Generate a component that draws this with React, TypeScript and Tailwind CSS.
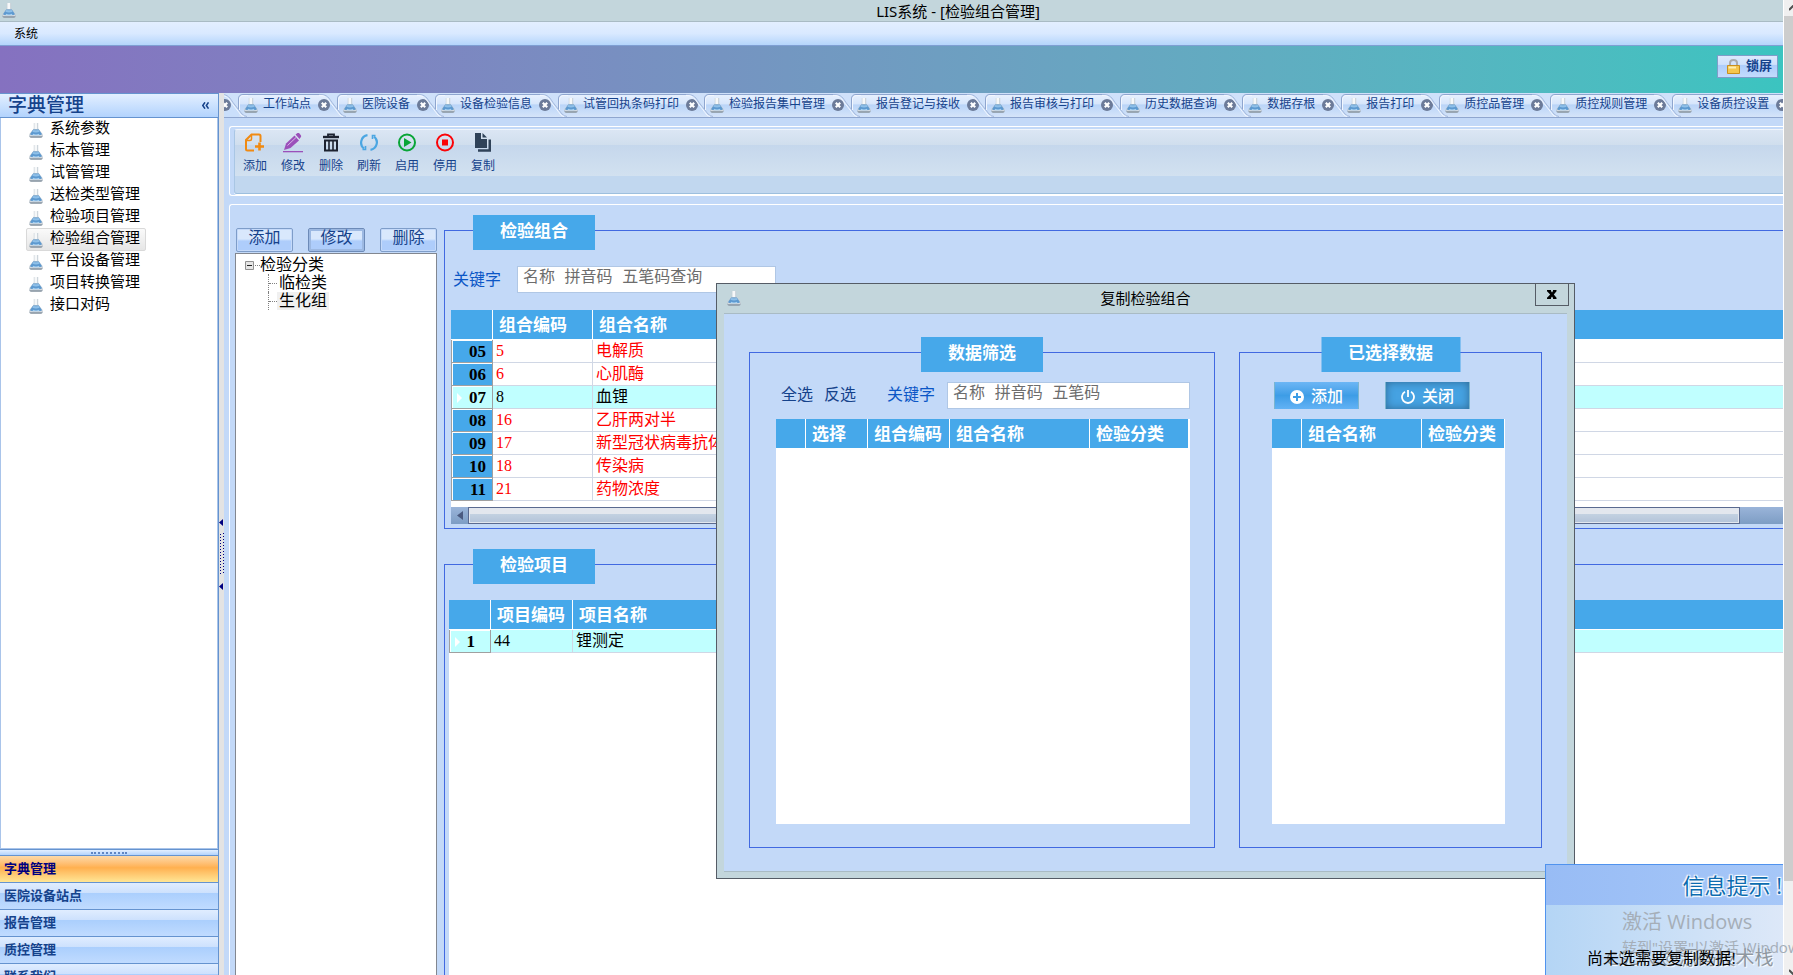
import type { ReactNode } from "react";

const sidebarItems = [
  "系统参数",
  "标本管理",
  "试管管理",
  "送检类型管理",
  "检验项目管理",
  "检验组合管理",
  "平台设备管理",
  "项目转换管理",
  "接口对码",
];

const navGroups = ["字典管理", "医院设备站点", "报告管理", "质控管理", "联系我们"];

const tabs = [
  "工作站点",
  "医院设备",
  "设备检验信息",
  "试管回执条码打印",
  "检验报告集中管理",
  "报告登记与接收",
  "报告审核与打印",
  "历史数据查询",
  "数据存根",
  "报告打印",
  "质控品管理",
  "质控规则管理",
  "设备质控设置",
];

const comboRows = [
  { no: "05", code: "5", name: "电解质" },
  { no: "06", code: "6", name: "心肌酶" },
  { no: "07", code: "8", name: "血锂", active: true },
  { no: "08", code: "16", name: "乙肝两对半" },
  { no: "09", code: "17", name: "新型冠状病毒抗体" },
  { no: "10", code: "18", name: "传染病" },
  { no: "11", code: "21", name: "药物浓度" },
];

function FlaskIcon() {
  return (
    <svg width="14" height="15" viewBox="0 0 14 15" className="shrink-0" aria-hidden="true">
      <path d="M4.800 0h4.400v5.500L13.600 11q.4 3.600-1.600 3.600H2Q0 14.600.4 11L4.800 5.500z" fill="#c3ccd4" />
      <path d="M5.400 0h2.800v6H5.400z" fill="#f6f8f9" />
      <path d="M4.200 6.500h5.600L13 11.200Q10.500 13 7 13T1 11.200z" fill="#5d99d0" />
      <path d="M4.500 6.800q2.500 1 5 0l1.200 1.900q-3.700 1.600-7.400 0z" fill="#8fc0e8" />
      <path d="M4 10.800q3 1.400 6 0l.4 1q-3.400 1.200-6.800 0z" fill="#a9d3f3" />
      <path d="M.4 12.800h13.200q0 2-1.600 2H2q-1.600 0-1.600-2z" fill="#8b98a4" />
      <path d="M1 12.700h12" stroke="#e3e9ee" strokeWidth="0.8" />
    </svg>
  );
}

function CloseDot() {
  return (
    <svg width="12" height="12" viewBox="0 0 12 12" className="block" aria-hidden="true">
      <circle cx="6" cy="6" r="6" fill="#6c7b99" />
      <path d="M3.800 3.800l4.400 4.400M8.200 3.800l-4.400 4.400" stroke="#fff" strokeWidth="2.200" />
    </svg>
  );
}

function TabEdge() {
  return (
    <svg width="28" height="23" viewBox="0 0 28 23" className="absolute -top-px -left-[19px]" aria-hidden="true">
      <path d="M0 0H28V1H22L18 5V16L10 7L4 1H0z" fill="#cfe1fa" />
      <path d="M0 .5H2C8 .5 10 4 13 8.500L22 20Q24 22 27 22.500" fill="none" stroke="#a3b8dc" />
      <path d="M0 1.500H1C7 1.500 9 5 12 9.500L21 21Q22 22 24 22.500" fill="none" stroke="#f2f7ff" />
      <path d="M18.500 15V5Q18.500 .5 23 .5H28" fill="none" stroke="#8fa6cf" />
      <path d="M19.500 16V6Q19.500 1.500 24 1.500H28" fill="none" stroke="#f2f7ff" />
    </svg>
  );
}

const toolbar: { label: string; icon: ReactNode }[] = [
  {
    label: "添加",
    icon: (
      <g fill="none" stroke="#f08a12" strokeWidth="2">
        <path d="M9 17.500H2.500Q1 17.500 1 16V7L6.500 1.500H14Q15.500 1.500 15.500 3V9" />
        <path d="M1.500 7.500H5Q6.500 7.500 6.500 6V2" strokeWidth="1.500" />
        <path d="M14.500 9.500v8M10 13.500h9" strokeWidth="2.600" />
      </g>
    ),
  },
  {
    label: "修改",
    icon: (
      <g fill="#9b50ba">
        <path d="M1 17L3 10.500L11.500 2.500L16 7.500L7.500 15z" />
        <path d="M12.500 1.500L14.500 0Q15.500-.5 16.500.5L18 2.500Q18.500 3.500 17.500 4.500L16.500 6z" />
        <path d="M4.500 12.500L13 4.500" stroke="#d9b5ea" strokeWidth="1" />
        <path d="M0 18h20v1.300H0z" />
      </g>
    ),
  },
  {
    label: "删除",
    icon: (
      <g fill="none" stroke="#1c2230">
        <path d="M2 4h16" strokeWidth="2.400" />
        <path d="M7 3V1.500h6V3" strokeWidth="1.800" />
        <path d="M4 7.500h12V17.500H4z" strokeWidth="2" />
        <path d="M8 8v9M12 8v9" strokeWidth="1.600" />
      </g>
    ),
  },
  {
    label: "刷新",
    icon: (
      <g fill="none" stroke="#4ba6e2" strokeWidth="2.200">
        <path d="M8.500 2.200A7.500 7.500 0 0 0 5 15.500" />
        <path d="M11.500 16.800A7.500 7.500 0 0 0 15 3.500" />
        <path d="M3.500 16.500H6.500V13M16.500 2.500H13.500V6" strokeWidth="1.600" />
      </g>
    ),
  },
  {
    label: "启用",
    icon: (
      <g>
        <circle cx="10" cy="9.500" r="8" fill="none" stroke="#08a536" strokeWidth="2" />
        <path d="M7 5L14.500 9.500L7 14z" fill="#08a536" />
      </g>
    ),
  },
  {
    label: "停用",
    icon: (
      <g>
        <circle cx="10" cy="9.500" r="8" fill="none" stroke="#fb0307" strokeWidth="2" />
        <path d="M7 6.500h6v6H7z" fill="#fb0307" />
      </g>
    ),
  },
  {
    label: "复制",
    icon: (
      <g fill="#2f4258">
        <path d="M2 0H8V6H14V15H2z" />
        <path d="M9.500 0L14 4.500H9.500z" />
        <path d="M5 16.200H15.500V6.500H18V18.700H5z" />
      </g>
    ),
  },
];

function GroupTitle({ children, center = false }: { children: ReactNode; center?: boolean }) {
  return (
    <h2
      className={
        "absolute -top-4 flex h-[35px] items-start bg-[#46a8ea] px-[27px] pt-1 text-[17px] leading-[26px] font-bold whitespace-nowrap text-white " +
        (center ? "left-1/2 -translate-x-1/2" : "left-7")
      }
    >
      {children}
    </h2>
  );
}

function HeadCell({ children, last = false }: { children?: ReactNode; last?: boolean }) {
  return (
    <th
      className={
        "h-[30px] truncate border-b border-white bg-[#46a8ea] px-[6px] pt-0.5 pb-0 text-left text-[17px] leading-[27px] font-bold text-white " +
        (last ? "" : "border-r")
      }
    >
      {children}
    </th>
  );
}

function DataRow({ no, code, name, active = false }: { no: string; code: string; name: string; active?: boolean }) {
  return (
    <tr className={active ? "bg-[#c0ffff] text-black" : "bg-white text-[#f00]"}>
      <th
        className={
          "h-[23px] border-r border-b border-l border-[#a0a0a0] p-0 text-[17px] leading-[20px] text-black shadow-[inset_1px_1px_0_#fff] " +
          (active ? "" : "bg-[#46a8ea]")
        }
      >
        <span className="flex items-center justify-between pt-px pr-[6px] pl-[5px]">
          <svg width="5" height="10" viewBox="0 0 5 10" aria-hidden="true">
            {active && <path d="M0 0L5 5L0 10z" fill="#fff" />}
          </svg>
          <span className={no.length === 1 ? "pr-[9px]" : ""}>{no}</span>
        </span>
      </th>
      <td className="border-r border-b border-[#d0d7e5] px-[3px] py-0 leading-[22px]">{code}</td>
      <td className="truncate border-b border-[#d0d7e5] px-[3px] py-0 leading-[22px]">{name}</td>
    </tr>
  );
}

function ClassicButton({ children, focused = false }: { children: ReactNode; focused?: boolean }) {
  return (
    <button
      type="button"
      className={
        "h-6 w-[57px] rounded-[2px] border bg-linear-to-b from-[#d9e8fc] from-45% to-[#aecdfb] to-55% pb-1 text-[16px] leading-[18px] text-[#15428b] " +
        (focused ? "border-[#6d8bb8] shadow-[inset_0_0_0_2px_#9db9e2]" : "border-[#7e9dc9] shadow-[inset_0_0_0_1px_#c5dafa]")
      }
    >
      {children}
    </button>
  );
}

function Sidebar() {
  return (
    <aside className="flex w-[219px] shrink-0 flex-col overflow-hidden border-r border-[#6593cf] bg-white">
      <div className="flex h-[25px] shrink-0 items-center justify-between border-y border-[#6593cf] bg-linear-to-b from-[#e3efff] to-[#b2d3fd] pr-[9px] pl-2">
        <h1 className="text-[19px] leading-[22px] font-medium text-[#15428b]">字典管理</h1>
        <button type="button" aria-label="收起" className="text-[#15428b]">
          <svg width="7" height="7" viewBox="0 0 7 7" fill="none" stroke="currentColor" strokeWidth="1.500">
            <path d="M3 .3L.8 3.500L3 6.700M6.500 .3L4.300 3.500L6.500 6.700" />
          </svg>
        </button>
      </div>
      <ul className="min-h-0 flex-1 border-x border-b border-[#a9c4ea]">
        {sidebarItems.map((item) => (
          <li key={item} className="h-[22px] pl-[25px]">
            <a
              href="#"
              className={
                "inline-flex h-[23px] items-center gap-[7px] rounded-[2px] border pr-[5px] pl-0.5 text-[15px] leading-[19px] text-black " +
                (item === "检验组合管理" ? "border-[#d9d9d9] bg-linear-to-b from-[#fafafa] to-[#e6e6e6]" : "border-transparent")
              }
            >
              <span className="pt-0.5">
                <FlaskIcon />
              </span>
              <span className="pb-0.5">{item}</span>
            </a>
          </li>
        ))}
      </ul>
      <div className="flex h-[7px] shrink-0 items-center justify-center border-y border-[#6593cf] bg-linear-to-b from-[#e3efff] to-[#b2d3fd]">
        <span className="w-[36px] border-t-2 border-dotted border-[#5f86c4]" />
      </div>
      <nav className="h-[119px] shrink-0 overflow-hidden">
        {navGroups.map((group, i) => (
          <button
            key={group}
            type="button"
            className={
              "block h-[27px] w-full border-b border-[#6593cf] pl-1 text-left text-[13px] leading-[26px] font-bold " +
              (i === 0
                ? "bg-linear-to-b from-[#fcd9a8] via-[#ffb04f] via-45% to-[#ffe695] text-[#000080]"
                : "bg-[linear-gradient(#e0edff,#cde1fd_38%,#abcffd_40%,#c0dbff)] text-[#15428b]")
            }
          >
            {group}
          </button>
        ))}
      </nav>
    </aside>
  );
}

function TabStrip() {
  return (
    <div className="flex h-[25px] shrink-0 items-end overflow-hidden border-b border-[#8fa6cf] bg-[#cfe1fa]">
      <div className="flex h-[23px] w-[15px] shrink-0 items-center justify-start border-t border-[#8fa6cf] bg-[#cadffb] pb-0.5">
        <button type="button" aria-label="关闭" className="-ml-[5px]">
          <CloseDot />
        </button>
      </div>
      {tabs.map((tab) => (
        <div
          key={tab}
          className="relative flex h-[23px] shrink-0 items-center border-t border-[#8fa6cf] bg-[linear-gradient(#e6f0fe,#d6e5fb_42%,#b9d4f8_44%,#d5e4f9)] pr-[7px] pb-0.5 pl-[5px] even:pr-2"
        >
          <TabEdge />
          <span className="relative">
            <FlaskIcon />
          </span>
          <a href="#" className="relative mx-[5px] mr-[7px] pb-0.5 text-[12px] leading-[16px] whitespace-nowrap text-[#15428b]">
            {tab}
          </a>
          <button type="button" aria-label={"关闭" + tab} className="relative">
            <CloseDot />
          </button>
        </div>
      ))}
    </div>
  );
}

function CopyDialog() {
  return (
    <div
      role="dialog"
      aria-label="复制检验组合"
      className="absolute top-[283px] left-[716px] flex h-[596px] w-[859px] flex-col border border-[#555c66] bg-[#c3d6dc] px-[7px] pb-[6px]"
    >
      <div className="relative flex h-[29px] shrink-0 items-center pl-[3px]">
        <FlaskIcon />
        <div className="flex-1 pt-0.5 pr-[17px] text-center text-[15px] leading-[27px] text-black">复制检验组合</div>
        <button
          type="button"
          aria-label="关闭窗口"
          className="absolute -top-px -right-[2px] flex h-[23px] w-[34px] items-center justify-center border border-[#555c66]"
        >
          <svg width="10" height="9" viewBox="0 0 10 9" aria-hidden="true">
            <path d="M0 0H4V1L5 2.500L6 1V0H9.500V1.200L6.800 4.500L9.500 7.800V9H6V8L5 6.500L4 8V9H0V7.800L3.200 4.500L0 1.200z" fill="#000" />
          </svg>
        </button>
      </div>
      <div className="flex flex-1 gap-6 border-y border-[#a9bbc4] bg-[#c3d9f8] px-[25px] pt-[38px] pb-[23px]">
        <section className="relative flex w-[466px] flex-col border border-[#4169e1] pt-[29px] pr-6 pb-[23px] pl-[26px]">
          <GroupTitle center>数据筛选</GroupTitle>
          <div className="flex h-[27px] shrink-0 items-center pl-[5px] text-[16px] leading-[22px]">
            <button type="button" className="pb-0.5 text-[#15428b]">
              全选
            </button>
            <button type="button" className="ml-[11px] pb-0.5 text-[#15428b]">
              反选
            </button>
            <label htmlFor="pick-keyword" className="ml-[31px] pb-0.5 text-[#0b56c6]">
              关键字
            </label>
            <input
              id="pick-keyword"
              placeholder="名称 拼音码 五笔码"
              className="ml-3 h-[27px] w-0 flex-1 border border-[#b0c7e5] bg-white px-[5px] pb-1 font-['Liberation_Mono','Noto_Sans_CJK_SC',monospace] placeholder:text-[#6d6d6d]"
            />
          </div>
          <div className="mt-2.5 flex-1 bg-white pr-0.5">
            <table className="w-full table-fixed border-separate border-spacing-0">
              <colgroup>
                <col className="w-[30px]" />
                <col className="w-[62px]" />
                <col className="w-[82px]" />
                <col className="w-[140px]" />
                <col />
              </colgroup>
              <thead>
                <tr>
                  <HeadCell />
                  <HeadCell>选择</HeadCell>
                  <HeadCell>组合编码</HeadCell>
                  <HeadCell>组合名称</HeadCell>
                  <HeadCell last>检验分类</HeadCell>
                </tr>
              </thead>
            </table>
          </div>
        </section>
        <section className="relative flex flex-1 flex-col border border-[#4169e1] pt-[29px] pr-9 pb-[23px] pl-8">
          <GroupTitle center>已选择数据</GroupTitle>
          <div className="flex h-[27px] shrink-0 gap-[26px] pl-0.5 text-[16px] font-medium text-white">
            <button
              type="button"
              className="flex w-[85px] items-center justify-center gap-[7px] border-x border-[#7ab5cf] bg-linear-to-b from-[#6cb6f5] via-[#3d9de6] to-[#62b2f5] pt-0.5"
            >
              <svg width="14" height="14" viewBox="0 0 14 14" aria-hidden="true">
                <circle cx="7" cy="7" r="7" fill="#fff" />
                <path d="M7 3v8M3 7h8" stroke="#3d9de6" strokeWidth="2" />
              </svg>
              添加
            </button>
            <button
              type="button"
              className="flex w-[85px] items-center justify-center gap-[7px] border-x border-[#7ab5cf] bg-[#46a2e2] pt-0.5 shadow-[inset_0_0_9px_#2f6a94]"
            >
              <svg width="14" height="14" viewBox="0 0 14 14" fill="none" stroke="#fff" strokeWidth="1.800" aria-hidden="true">
                <path d="M4 1.800A6 6 0 1 0 10 1.800M7 0V7" />
              </svg>
              关闭
            </button>
          </div>
          <div className="mt-2.5 flex-1 bg-white pr-px">
            <table className="w-full table-fixed border-separate border-spacing-0">
              <colgroup>
                <col className="w-[30px]" />
                <col className="w-[120px]" />
                <col />
              </colgroup>
              <thead>
                <tr>
                  <HeadCell />
                  <HeadCell>组合名称</HeadCell>
                  <HeadCell last>检验分类</HeadCell>
                </tr>
              </thead>
            </table>
          </div>
        </section>
      </div>
    </div>
  );
}

function Toast() {
  return (
    <div className="absolute right-[10px] bottom-0 h-[111px] w-[238px] border-t border-l border-[#5093ee] bg-linear-to-r from-[#b4d5f5] to-[#dde8f8] font-['Open_Sans','Noto_Sans_CJK_SC',sans-serif]">
      <div className="flex h-10 items-center justify-end overflow-hidden bg-linear-to-r from-[#98bcf5] to-[#a6c7f8] pr-px text-[22px] leading-[40px] whitespace-nowrap text-[#0d6cb0] [text-shadow:1px_1px_1px_#fff,-1px_-1px_1px_#fff,1px_-1px_1px_#fff,-1px_1px_1px_#fff]">
        信息提示 !
      </div>
      <div className="absolute top-[43px] left-[76px] text-[20px] leading-[28px] whitespace-nowrap text-[#a5aeb8]">激活 Windows</div>
      <div className="absolute top-[72px] left-[76px] w-[171px] overflow-hidden text-[15px] leading-[20px] whitespace-nowrap text-[#a5aeb8]">
        转到"设置"以激活 Windows
      </div>
      <div className="absolute top-[80px] left-[60px] text-[19px] leading-[26px] whitespace-nowrap text-[#8f979f] [text-shadow:1px_1px_1px_#fff]">
        CSDN @源码技术栈
      </div>
      <div className="absolute top-[82px] left-[41px] font-['Liberation_Serif','Noto_Sans_CJK_SC',serif] text-[16px] leading-[24px] whitespace-nowrap text-black">
        尚未选需要复制数据!
      </div>
    </div>
  );
}

export default function App() {
  return (
    <div className="relative flex h-screen overflow-hidden bg-white font-['Liberation_Serif','Noto_Sans_CJK_SC',serif] text-[16px]">
      <div className="flex min-w-0 flex-1 flex-col">
        <header className="relative flex h-[22px] shrink-0 items-center border-b border-[#a9bbc4] bg-[#c3d6dc] pl-0.5">
          <FlaskIcon />
          <div className="flex-1 pl-[117px] text-center font-['Noto_Sans','Noto_Sans_CJK_SC',sans-serif] text-[15px] leading-[20px] text-black">
            LIS系统 - [检验组合管理]
          </div>
        </header>
        <nav className="flex h-6 shrink-0 items-center border-b border-[#7f9fd3] bg-linear-to-b from-[#e3efff] via-[#d9e9ff] to-[#b4d5fb] pl-3.5">
          <a href="#" className="text-[12px] leading-[20px] text-black">
            系统
          </a>
        </nav>
        <div className="flex h-[47px] shrink-0 items-start justify-end bg-linear-to-r from-[#8571c0] to-[#3bc4c0] pt-[9px] pr-[5px]">
          <button
            type="button"
            className="flex h-[23px] w-[61px] items-center justify-center gap-[6px] border border-[#7e9dc9] bg-[linear-gradient(#dce9fd,#cfe1fc_40%,#aecdfb_45%,#c3dbfd)] pl-1 text-[13px] leading-[18px] font-bold text-[#15428b]"
          >
            <svg width="13" height="15" viewBox="0 0 13 15" aria-hidden="true">
              <path d="M3 7V4Q3 1 6.500 1T10 4V7" fill="none" stroke="#a9abb0" strokeWidth="2" />
              <path d="M.5 6.500H12.500V14.500H.5z" fill="#f5c64d" stroke="#c98f1d" />
              <path d="M1.500 7.500H9V9.500H1.500z" fill="#fdeeb0" />
            </svg>
            <span className="pb-0.5">锁屏</span>
          </button>
        </div>

        <div className="flex min-h-0 flex-1">
          <Sidebar />
          <div className="flex w-[5px] shrink-0 flex-col items-center justify-center bg-[#e3e3e3] pt-[42px]">
            <svg width="5" height="72" viewBox="0 0 5 72" aria-hidden="true">
              <path d="M4 0V7L0 3.500zM4 64V71L0 67.500z" fill="#000080" />
              <path d="M1.500 15V56" stroke="#000080" strokeDasharray="1 2" />
              <path d="M4.500 14V56" stroke="#000080" strokeDasharray="1 2" />
            </svg>
          </div>

          <main className="flex min-w-0 flex-1 flex-col bg-[#c3d9f8]">
            <TabStrip />
            <div className="mt-2 ml-[5px] h-[70px] shrink-0 rounded-l-[3px] border-y border-l border-white pt-0.5 pl-1">
              <div className="flex h-[65px] items-start rounded-l-[3px] border-y border-l border-t-[#f0f5fb] border-b-[#9dbfde] border-l-[#a9c6e4] bg-[linear-gradient(#dbe6f4,#d0deed_15px,#c5d7ec_15px,#d2e1f0_46px,#c1d7ef_46px)] pt-[3px] pl-px shadow-[0_1px_0_#fff]">
                {toolbar.map((tool) => (
                  <button key={tool.label} type="button" className="flex w-[38px] flex-col items-center text-[12px] leading-[18px] text-[#15428b]">
                    <svg width="20" height="20" viewBox="0 0 20 20" aria-hidden="true">
                      {tool.icon}
                    </svg>
                    <span className="pt-1">{tool.label}</span>
                  </button>
                ))}
              </div>
            </div>

            <div className="mt-2 ml-[5px] flex min-h-0 flex-1 rounded-tl-[3px] border-t border-l border-white">
              <div className="flex w-[207px] shrink-0 flex-col pt-[23px] pl-[5px]">
                <div className="flex shrink-0 justify-between pb-px pl-px">
                  <ClassicButton>添加</ClassicButton>
                  <ClassicButton focused>修改</ClassicButton>
                  <ClassicButton>删除</ClassicButton>
                </div>
                <div className="flex-1 border-x border-t border-[#828790] bg-white pt-0.5 pl-[9px] text-[16px] leading-[18px] text-black">
                  <div className="flex items-center">
                    <svg width="15" height="9" viewBox="0 0 15 9" aria-hidden="true">
                      <path d="M.5 .5H8.500V8.500H.5z" fill="#e6e6e6" stroke="#919191" />
                      <path d="M2 4.500H7" stroke="#222" />
                      <path d="M10 4.500H15" stroke="#808080" strokeDasharray="1 1" />
                    </svg>
                    检验分类
                  </div>
                  <ul className="pl-[23px]">
                    {["临检类", "生化组"].map((node) => (
                      <li key={node} className="flex h-[18px] items-center">
                        <span className="h-[18px] w-[9px] self-start border-l border-dotted border-[#808080] pt-[9px]">
                          <span className="block border-t border-dotted border-[#808080]" />
                        </span>
                        <span className={node === "生化组" ? "bg-[#f0f0f0] px-0.5" : "px-0.5"}>{node}</span>
                      </li>
                    ))}
                  </ul>
                </div>
              </div>

              <div className="ml-[7px] flex min-w-0 flex-1 flex-col pt-[25px]">
                <section className="relative shrink-0 border-y border-l border-[#4169e1] pt-[35px] pb-1 pl-[6px]">
                  <GroupTitle>检验组合</GroupTitle>
                  <div className="flex h-[27px] items-center gap-4 pl-0.5 text-[16px] leading-[24px]">
                    <label htmlFor="combo-keyword" className="text-[#0b56c6]">
                      关键字
                    </label>
                    <input
                      id="combo-keyword"
                      placeholder="名称 拼音码 五笔码查询"
                      className="h-[27px] w-[259px] border border-[#b0c7e5] bg-white px-[5px] pb-1 font-['Liberation_Mono','Noto_Sans_CJK_SC',monospace] placeholder:text-[#6d6d6d]"
                    />
                  </div>
                  <div className="mt-[17px] bg-white">
                    <table className="w-full table-fixed border-separate border-spacing-0">
                      <colgroup>
                        <col className="w-[42px]" />
                        <col className="w-[100px]" />
                        <col />
                      </colgroup>
                      <thead>
                        <tr>
                          <HeadCell />
                          <HeadCell>组合编码</HeadCell>
                          <HeadCell last>组合名称</HeadCell>
                        </tr>
                      </thead>
                      <tbody>
                        {comboRows.map((row) => (
                          <DataRow key={row.no} {...row} />
                        ))}
                      </tbody>
                    </table>
                    <div className="mt-[6px] flex h-[17px] bg-linear-to-b from-[#9ab4d9] to-[#7d9dc4]">
                      <div className="flex w-[17px] items-center justify-center">
                        <svg width="6" height="9" viewBox="0 0 6 9" aria-hidden="true">
                          <path d="M6 0V9L0 4.500z" fill="#4a5a80" />
                        </svg>
                      </div>
                      <div className="mr-[43px] flex-1 border border-[#5a6a90] bg-[linear-gradient(#e3e7ee_6px,#c3d1e1_6px,#b3c3d9)] shadow-[inset_0_0_0_1px_#e3e7ee]" />
                    </div>
                  </div>
                </section>

                <section className="relative mt-[35px] flex flex-1 flex-col border-t border-l border-[#4169e1] pt-[35px] pl-1">
                  <GroupTitle>检验项目</GroupTitle>
                  <div className="flex-1 bg-white">
                    <table className="w-full table-fixed border-separate border-spacing-0">
                      <colgroup>
                        <col className="w-[42px]" />
                        <col className="w-[82px]" />
                        <col />
                      </colgroup>
                      <thead>
                        <tr>
                          <HeadCell />
                          <HeadCell>项目编码</HeadCell>
                          <HeadCell last>项目名称</HeadCell>
                        </tr>
                      </thead>
                      <tbody>
                        <DataRow no="1" code="44" name="锂测定" active />
                      </tbody>
                    </table>
                  </div>
                </section>
              </div>
            </div>
          </main>
        </div>
      </div>

      <div className="ml-px flex w-[9px] shrink-0 flex-col overflow-hidden bg-[#f0f0f0]">
        <div className="flex h-4 w-[17px] shrink-0 items-center justify-center">
          <svg width="8" height="6" viewBox="0 0 8 6" fill="none" stroke="#505050" strokeWidth="2" aria-hidden="true">
            <path d="M0 5L4 1L8 5" />
          </svg>
        </div>
        <div className="mb-[78px] flex-1 bg-[#cdcdcd]" />
        <div className="flex h-4 w-[17px] shrink-0 items-end justify-center">
          <svg width="8" height="6" viewBox="0 0 8 6" fill="none" stroke="#505050" strokeWidth="2" aria-hidden="true">
            <path d="M0 1L4 5L8 1" />
          </svg>
        </div>
      </div>

      <CopyDialog />
      <Toast />
    </div>
  );
}
